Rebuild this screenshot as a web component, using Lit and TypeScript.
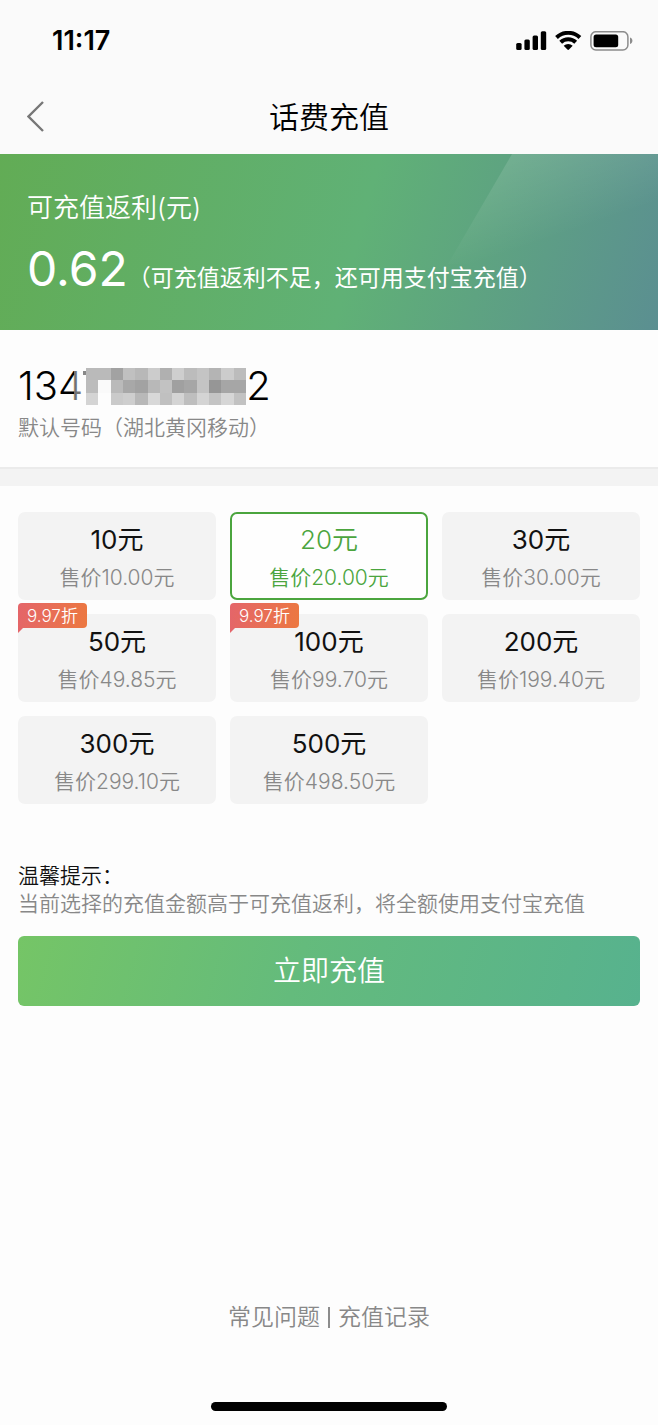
import { LitElement, html, svg, css } from "lit";
import { customElement, state } from "lit/decorators.js";
import { classMap } from "lit/directives/class-map.js";

interface Plan {
  amount: number;
  price: string;
  discount?: string;
}

const PLANS: Plan[] = [
  { amount: 10, price: "10.00" },
  { amount: 20, price: "20.00" },
  { amount: 30, price: "30.00" },
  { amount: 50, price: "49.85", discount: "9.97折" },
  { amount: 100, price: "99.70", discount: "9.97折" },
  { amount: 200, price: "199.40" },
  { amount: 300, price: "299.10" },
  { amount: 500, price: "498.50" },
];

// Grey level of every block that hides the middle digits.
const MASK: number[][] = [
  [186, 186, 162, 192, 184, 204, 176, 206, 188, 196, 180, 204, 188],
  [188, 250, 186, 168, 162, 184, 194, 160, 166, 196, 150, 166, 166],
  [212, 253, 202, 206, 184, 216, 192, 212, 190, 212, 196, 214, 194],
];

@customElement("status-bar")
export class StatusBar extends LitElement {
  static styles = css`
    :host {
      display: flex;
      justify-content: space-between;
      align-items: center;
      height: 78px;
      padding: 2px 25px 0 52px;
      color: #000;
    }
    .time {
      font-size: 27px;
      line-height: 32px;
      font-weight: 600;
    }
    .icons {
      display: flex;
      align-items: center;
      gap: 8px;
    }
    svg {
      display: block;
    }
  `;

  render() {
    return html`
      <span class="time">11:17</span>
      <span class="icons">
        <svg width="31" height="20" viewBox="0 0 31 20" aria-label="信号" role="img">
          <rect x="0.2" y="12" width="5.4" height="7" rx="1.5" />
          <rect x="8.4" y="8.500" width="5.4" height="10.5" rx="1.5" />
          <rect x="16.6" y="4.500" width="5.4" height="14.5" rx="1.5" />
          <rect x="24.8" y="0.3" width="5.4" height="18.7" rx="1.5" />
        </svg>
        <svg width="27" height="20" viewBox="0 0 27 20" aria-label="无线网络" role="img">
          <g fill="none" stroke="#000" stroke-width="4">
            <path d="M1.5 6.500a17 17 0 0 1 23.4 0" />
            <path d="M5.7 11.300a10.8 10.8 0 0 1 15 0" />
          </g>
          <path d="M8.700 14.700a6.600 6.600 0 0 1 9 0l-3.700 3.800a1.100 1.100 0 0 1-1.600 0z" />
        </svg>
        <svg width="43" height="20" viewBox="0 0 43 20" aria-label="电量" role="img">
          <rect x="0.9" y="0.7" width="37" height="18.2" rx="5" fill="none" stroke="#8c8c8c" stroke-width="1.5" />
          <rect x="3.6" y="3.4" width="24.6" height="12.8" rx="2.5" />
          <path d="M40 6.600c3.2 1 3.2 5.400 0 6.400z" fill="#8c8c8c" />
        </svg>
      </span>
    `;
  }
}

@customElement("app-root")
export class AppRoot extends LitElement {
  @state() private selected = 20;

  static styles = css`
    :host {
      display: flex;
      flex-direction: column;
      min-height: 100vh;
      box-sizing: border-box;
      background: #fdfdfd;
      color: #111;
      font-family: Inter, "Noto Sans CJK SC", sans-serif;
      font-weight: 350;
      -webkit-font-smoothing: antialiased;
    }
    button {
      border: 0;
      background: none;
      padding: 0;
      font: inherit;
      color: inherit;
    }
    .top {
      background: #fafafa;
    }
    .nav {
      display: grid;
      grid-template-columns: 48px 1fr 48px;
      align-items: center;
      height: 74px;
      padding: 0 12px;
    }
    .back {
      display: flex;
      align-items: center;
      justify-content: center;
      height: 48px;
    }
    .title {
      margin: 0;
      font-size: 30px;
      line-height: 44px;
      font-weight: 350;
      text-align: center;
      color: #000;
    }
    .hero {
      position: relative;
      padding: 36px 27px 31px;
      color: #fff;
      background: linear-gradient(105deg, #62ac55 0%, #60b176 54%, #5b8f91 100%);
    }
    .shine {
      position: absolute;
      top: 0;
      right: 0;
    }
    .label {
      position: relative;
      margin: 0;
      font-size: 26px;
      line-height: 36px;
    }
    .balance {
      position: relative;
      display: flex;
      align-items: baseline;
      margin: 13px 0 0;
    }
    .value {
      font-size: 48px;
      line-height: 60px;
      font-weight: 400;
    }
    .note {
      font-size: 23px;
      line-height: 32px;
      font-weight: 400;
    }
    .phone {
      padding: 32px 18px 23px;
      border-bottom: 2px solid #ebebeb;
    }
    .number {
      display: flex;
      align-items: center;
      margin: 0;
      font-size: 40px;
      line-height: 48px;
      color: #000;
    }
    .mask {
      position: relative;
      display: block;
      margin-left: -9px;
    }
    .carrier {
      margin: 2px 0 0;
      font-size: 21px;
      line-height: 32px;
      color: #888;
    }
    .band {
      height: 17px;
      background: #f3f3f3;
    }
    .plans {
      display: grid;
      grid-template-columns: repeat(3, 1fr);
      gap: 14px;
      margin: 0;
      padding: 26px 18px 0;
      border: 0;
      min-width: 0;
    }
    .plan {
      position: relative;
      display: flex;
      flex-direction: column;
      align-items: center;
      justify-content: center;
      box-sizing: border-box;
      height: 88px;
      padding-top: 6px;
      border: 2px solid #f3f3f3;
      border-radius: 7px;
      background: #f3f3f3;
      cursor: pointer;
    }
    .plan.on {
      background: #fefefe;
      border-color: #4ba53e;
    }
    .radio {
      position: absolute;
      inset: 0;
      margin: 0;
      opacity: 0;
    }
    .amount {
      font-size: 26px;
      line-height: 38px;
      font-weight: 400;
      color: #111;
    }
    .price {
      font-size: 21px;
      line-height: 38px;
      color: #888;
    }
    .on .amount,
    .on .price {
      color: #4ba53e;
    }
    .on .amount {
      font-weight: 350;
    }
    .tag {
      position: absolute;
      top: -13px;
      left: -2px;
      height: 25px;
      padding: 0 9px;
      border-radius: 4px 4px 4px 0;
      background: linear-gradient(100deg, #e4656a, #ec7840);
      color: #fff;
      font-size: 17px;
      line-height: 26px;
    }
    .tag::after {
      content: "";
      position: absolute;
      top: 100%;
      left: 0;
      border-top: 5px solid #e4656a;
      border-right: 5px solid transparent;
    }
    .tips {
      padding: 58px 18px 0;
      font-size: 21px;
      line-height: 28px;
    }
    .tips-title {
      margin: 0;
      color: #111;
    }
    .tips-text {
      margin: 0;
      color: #888;
    }
    .pay {
      height: 70px;
      margin: 18px 18px 48px;
      border-radius: 6px;
      background: linear-gradient(105deg, #75c566 0%, #64bb7c 45%, #57b28e 100%);
      color: #fff;
      font-size: 28px;
      line-height: 40px;
      cursor: pointer;
    }
    .links {
      display: flex;
      align-items: center;
      justify-content: center;
      gap: 8px;
      margin-top: auto;
      font-size: 23px;
      line-height: 32px;
    }
    .links a {
      color: #888;
      text-decoration: none;
    }
    .divider {
      width: 2px;
      height: 21px;
      background: #8c8c8c;
    }
    .home {
      align-self: center;
      width: 36%;
      height: 9px;
      margin: 69px 0 14px;
      border-radius: 5px;
      background: #000;
    }
  `;

  private renderMask() {
    return html`
      <svg class="mask" width="172" height="38" viewBox="0 0 172 38" shape-rendering="crispEdges" role="img" aria-label="已隐藏的号码">
        <rect width="12" height="38" fill="#fdfdfd" fill-opacity="0.45" />
        <path d="M9 4h3v4H9z" fill="#888" />
        ${MASK.map((row, y) =>
          row.map(
            (g, x) => svg`<rect x=${12 + x * 12.3} y=${1 + y * 12.3} width="12.4" height="12.4" fill="rgb(${g},${g},${g})" />`,
          ),
        )}
      </svg>
    `;
  }

  private renderPlan(p: Plan) {
    const on = p.amount === this.selected;
    return html`
      <label class=${classMap({ plan: true, on })}>
        <input
          class="radio"
          type="radio"
          name="plan"
          .value=${String(p.amount)}
          .checked=${on}
          @change=${() => (this.selected = p.amount)}
        />
        <span class="amount">${p.amount}元</span>
        <span class="price">售价${p.price}元</span>
        ${p.discount ? html`<span class="tag">${p.discount}</span>` : null}
      </label>
    `;
  }

  render() {
    return html`
      <header class="top">
        <status-bar></status-bar>
        <div class="nav">
          <button class="back" type="button" aria-label="返回">
            <svg width="18" height="32" viewBox="0 0 18 32" fill="none" stroke="#777" stroke-width="2.4">
              <path d="M16 1 1.500 15.500 16 30" />
            </svg>
          </button>
          <h1 class="title">话费充值</h1>
        </div>
      </header>
      <section class="hero">
        <svg class="shine" width="212" height="110" viewBox="0 0 212 110">
          <defs>
            <linearGradient id="shine" gradientUnits="userSpaceOnUse" x1="66" y1="0" x2="96" y2="88">
              <stop offset="0" stop-color="#fff" stop-opacity="0.13" />
              <stop offset="1" stop-color="#fff" stop-opacity="0" />
            </linearGradient>
          </defs>
          <path d="M66 0 2 110h210V0z" fill="url(#shine)" />
        </svg>
        <p class="label">可充值返利(元)</p>
        <p class="balance">
          <span class="value">0.62</span>
          <span class="note">（可充值返利不足，还可用支付宝充值）</span>
        </p>
      </section>
      <section class="phone">
        <p class="number"><span>134</span>${this.renderMask()}<span>2</span></p>
        <p class="carrier">默认号码（湖北黄冈移动）</p>
      </section>
      <div class="band"></div>
      <fieldset class="plans" aria-label="充值金额">${PLANS.map((p) => this.renderPlan(p))}</fieldset>
      <section class="tips">
        <p class="tips-title">温馨提示：</p>
        <p class="tips-text">当前选择的充值金额高于可充值返利，将全额使用支付宝充值</p>
      </section>
      <button class="pay" type="button">立即充值</button>
      <nav class="links">
        <a href="#faq">常见问题</a>
        <span class="divider"></span>
        <a href="#history">充值记录</a>
      </nav>
      <div class="home"></div>
    `;
  }
}
